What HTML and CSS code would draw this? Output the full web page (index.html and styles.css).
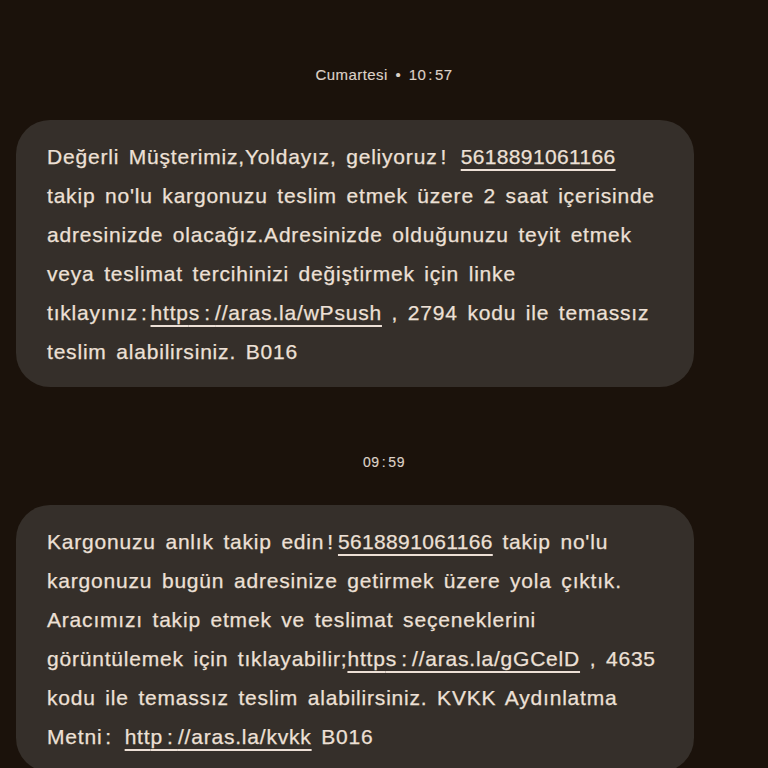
FILE: index.html
```html
<!DOCTYPE html>
<html lang="tr">
<head>
<meta charset="utf-8">
<link rel="stylesheet" href="styles.css">
</head>
<body>
<div class="screen">
  <div class="prev-edge"></div>
  <div class="stamp stamp-first">Cumartesi <span class="dot">•</span> 10<span class="sc">:</span>57</div>
  <div class="bubble">
    <p class="msg">Değerli Müşterimiz,Yoldayız, geliyoruz<span class="bang">!</span> <span class="link num">5618891061166</span><br>takip no'lu kargonuzu teslim etmek üzere 2 saat içerisinde<br>adresinizde olacağız.Adresinizde olduğunuzu teyit etmek<br>veya teslimat tercihinizi değiştirmek için linke<br>tıklayınız<span class="c">:</span><span class="link">http<span class="sp">s:</span>//aras.la/wPsush</span> , 2794 kodu ile temassız<br>teslim alabilirsiniz. B016</p>
  </div>
  <div class="stamp stamp-second">09<span class="sc">:</span>59</div>
  <div class="bubble">
    <p class="msg">Kargonuzu anlık takip edin<span class="bang">!</span><span class="link num">5618891061166</span> takip no'lu<br>kargonuzu bugün adresinize getirmek üzere yola çıktık.<br>Aracımızı takip etmek ve teslimat seçeneklerini<br>görüntülemek için tıklayabilir;<span class="link">http<span class="sp">s:</span>//aras.la/gGCelD</span> , 4635<br>kodu ile temassız teslim alabilirsiniz. KVKK Aydınlatma<br>Metni<span class="c">:</span> <span class="link">htt<span class="sp">p:</span>//aras.la/kvkk</span> B016</p>
  </div>
</div>
</body>
</html>
```
FILE: styles.css
```css
html, body {
  margin: 0;
  padding: 0;
  background: #1b120b;
}
.screen {
  width: 768px;
  height: 768px;
  overflow: hidden;
  display: flex;
  flex-direction: column;
  background: #1b120b;
  font-family: "Liberation Sans", Arial, sans-serif;
}
.prev-edge {
  height: 2px;
  margin: 0 112px 0 48px;
  background: #2b2119;
}
.stamp {
  align-self: center;
  color: #ddd1c7;
  font-size: 15px;
  line-height: 18px;
  -webkit-text-stroke: 0.15px #ddd1c7;
}
.stamp-first {
  margin-top: 66px;
  letter-spacing: 0.45px;
}
.stamp-second {
  margin-top: 66px;
  font-size: 14px;
  letter-spacing: 0.6px;
}
.sc {
  margin: 0 2px;
}
.dot {
  margin: 0 3px;
}
.bubble {
  width: 678px;
  margin-left: 16px;
  background: #352f2a;
  border-radius: 34px;
  box-sizing: border-box;
  padding: 17px 20px 16px 31px;
}
.stamp-first + .bubble {
  margin-top: 36px;
}
.stamp-second + .bubble {
  margin-top: 34px;
}
.msg {
  margin: 0;
  color: #ede0d6;
  font-size: 21px;
  line-height: 39px;
  letter-spacing: 0.8px;
  word-spacing: 3px;
  white-space: nowrap;
  -webkit-text-stroke: 0.25px #ede0d6;
}
.link {
  text-decoration: underline;
  text-decoration-thickness: 1.5px;
  text-underline-offset: 5px;
}
.num {
  letter-spacing: 0.35px;
}
.sp {
  letter-spacing: 5px;
}
.c {
  margin: 0 3px;
}
.bang {
  margin: 0 4px 0 3px;
}
```
